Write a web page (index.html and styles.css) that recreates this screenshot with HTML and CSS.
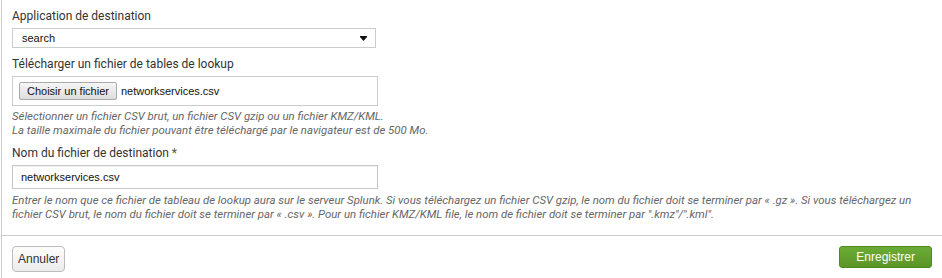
FILE: index.html
```html
<!DOCTYPE html>
<html lang="fr">
<head>
    <meta charset="UTF-8">
    <meta name="viewport" content="width=device-width, initial-scale=1.0">
    <title>Ajouter un fichier de lookup</title>
    <link rel="stylesheet" href="styles.css">
</head>
<body>
    <div class="modal">
        <div class="modal-body">

            <div class="field">
                <label class="field-label">Application de destination</label>
                <div class="select">
                    <span>search</span>
                    <svg class="caret" width="7" height="5" viewBox="0 0 7 5"><polygon points="0,0 7,0 7,1 3.5,5 0,1" fill="#111"/></svg>
                </div>
            </div>

            <div class="field">
                <label class="field-label">Télécharger un fichier de tables de lookup</label>
                <div class="file-box">
                    <span class="file-btn">Choisir un fichier</span>
                    <span class="file-name">networkservices.csv</span>
                </div>
                <p class="help">Sélectionner un fichier CSV brut, un fichier CSV gzip ou un fichier KMZ/KML.<br>
                La taille maximale du fichier pouvant être téléchargé par le navigateur est de 500 Mo.</p>
            </div>

            <div class="field field-last">
                <label class="field-label">Nom du fichier de destination <span class="req">*</span></label>
                <input class="text-input" type="text" value="networkservices.csv">
                <p class="help help-tight">Entrer le nom que ce fichier de tableau de lookup aura sur le serveur Splunk. Si vous téléchargez un fichier CSV gzip, le nom du fichier doit se terminer par « .gz ». Si vous téléchargez un<br>
                fichier CSV brut, le nom du fichier doit se terminer par « .csv ». Pour un fichier KMZ/KML file, le nom de fichier doit se terminer par ".kmz"/".kml".</p>
            </div>

        </div>

        <div class="modal-footer">
            <button class="btn">Annuler</button>
            <button class="btn btn-primary">Enregistrer</button>
        </div>
    </div>
</body>
</html>
```

FILE: styles.css
```css
*{
    padding: 0;
    margin: 0;
    box-sizing: border-box;
}
body{
    background-color: #fff;
    font-family: Roboto, "Liberation Sans", sans-serif;
    color: #333;
}
.modal{
    margin-left: 1px;
    border-left: 1px solid #ccc;
    height: 278px;
}
.modal-body{
    padding: 8px 10px 14px 10px;
}
.field{
    margin-bottom: 8px;
}
.field-last{
    margin-bottom: 0;
}
.field-label{
    display: block;
    font-size: 12px;
    line-height: 16px;
    margin-bottom: 4px;
    color: #333;
}
.req{
    color: #555;
}

/* select */
.select{
    display: flex;
    align-items: center;
    justify-content: space-between;
    width: 364px;
    height: 20px;
    padding: 0 8px 0 9px;
    border: 1px solid #ccc;
    background-color: #fff;
    font-family: "Liberation Sans", Arial, sans-serif;
    font-size: 11px;
    color: #111;
}
.caret{
    display: block;
}

/* file upload */
.file-box{
    display: flex;
    align-items: center;
    width: 366px;
    height: 30px;
    padding: 0 6px;
    border: 1px solid #ccc;
    background-color: #fff;
    font-family: "Liberation Sans", Arial, sans-serif;
    font-size: 11px;
    color: #111;
}
.file-btn{
    display: inline-block;
    height: 18px;
    line-height: 16px;
    padding: 0 7px;
    border: 1px solid #a9a9a9;
    border-radius: 2px;
    background: linear-gradient(#f6f6f6, #dedede);
    color: #111;
}
.file-name{
    margin-left: 4px;
}

.help{
    margin-top: 3px;
    font-size: 11.4px;
    line-height: 14px;
    font-style: italic;
    color: #666;
}
.help-tight{
    margin-top: 4px;
}

.text-input{
    display: block;
    width: 366px;
    height: 24px;
    padding: 0 8px;
    border: 1px solid #c6c6c6;
    box-shadow: inset 0 1px 1px rgba(0, 0, 0, 0.06);
    outline-style: none;
    font-family: "Liberation Sans", Arial, sans-serif;
    font-size: 11px;
    color: #111;
}

/* footer */
.modal-footer{
    display: flex;
    justify-content: space-between;
    align-items: flex-start;
    border-top: 1px solid #ccc;
    padding: 10px 10px 0 10px;
}
.btn{
    height: 26px;
    padding: 0 5px;
    border: 1px solid #bdbdbd;
    border-radius: 4px;
    background: linear-gradient(#fdfdfd, #ececec);
    font-family: "Liberation Sans", Arial, sans-serif;
    font-size: 12px;
    color: #333;
}
.btn-primary{
    height: 22px;
    padding: 0 16px;
    border: 1px solid #4f8a1f;
    border-radius: 3px;
    background: linear-gradient(#6cab35, #5b9527);
    color: #fff;
}
```
